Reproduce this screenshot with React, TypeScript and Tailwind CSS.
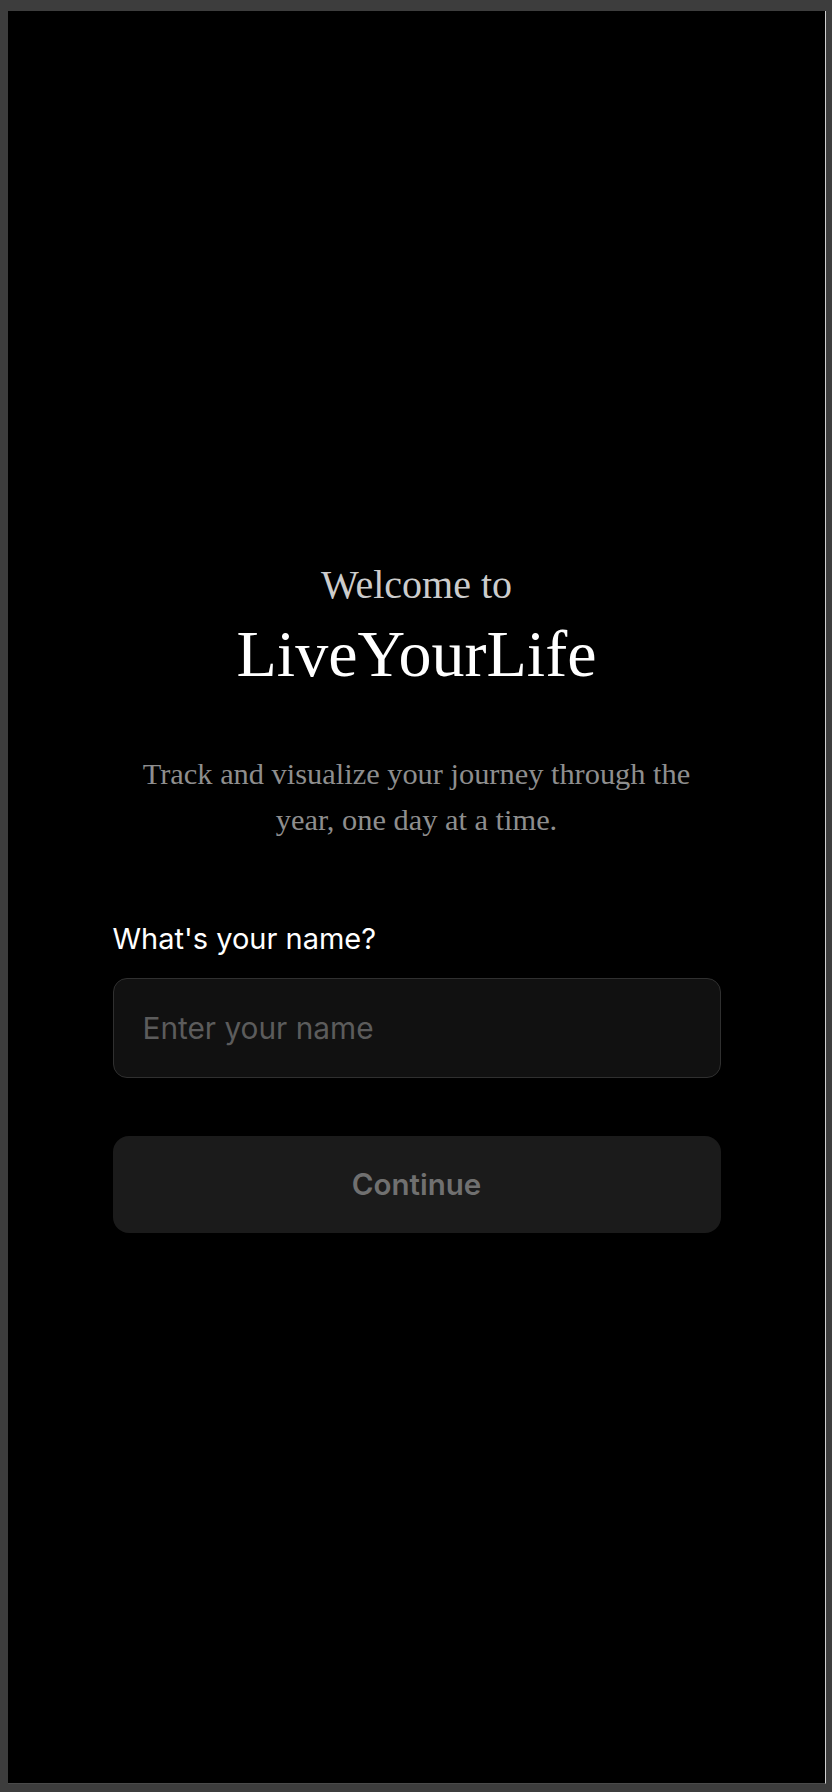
import { useState } from "react";

const serif = { fontFamily: '"Liberation Serif", "Times New Roman", serif' };
const sans = { fontFamily: "Inter, sans-serif" };

export default function App() {
  const [name, setName] = useState("");
  const ready = name.trim().length > 0;

  return (
    <div className="h-[1792px] w-full bg-[#3d3d3d] pl-[8px] pt-[11px] pr-[6px] pb-[8px]">
      <div className="flex h-full flex-col items-center justify-center border-r border-b border-r-[#cfcfcf] border-b-[#4a4a4a] bg-black">
        <div className="flex w-[608px] flex-col">
          <div className="text-center" style={serif}>
            <p className="text-[40px] leading-[46px] text-[#cccccc]">Welcome to</p>
            <h1 className="mt-[5px] text-[66px] leading-[82px] text-white">LiveYourLife</h1>
            <p className="mx-auto mt-[56px] max-w-[570px] text-[30.4px] leading-[46px] text-[#8e8e8e]">
              Track and visualize your journey through the year, one day at a time.
            </p>
          </div>

          <label htmlFor="name" className="mt-[79px] text-[29px] leading-[34px] text-white" style={sans}>
            What's your name?
          </label>
          <input
            id="name"
            value={name}
            onChange={(e) => setName(e.target.value)}
            placeholder="Enter your name"
            className="mt-[22px] h-[100px] w-full rounded-[14px] border-[1.5px] border-[#303030] bg-[#111111] px-[29px] text-[29.8px] text-white outline-none placeholder:text-[#5c5c5c]"
            style={sans}
          />
          <button
            type="button"
            disabled={!ready}
            className={`mt-[58px] h-[97px] w-full rounded-[16px] text-[29.5px] font-semibold ${
              ready ? "bg-white text-black" : "bg-[#1b1b1b] text-[#707070]"
            }`}
            style={sans}
          >
            Continue
          </button>
        </div>
      </div>
    </div>
  );
}
